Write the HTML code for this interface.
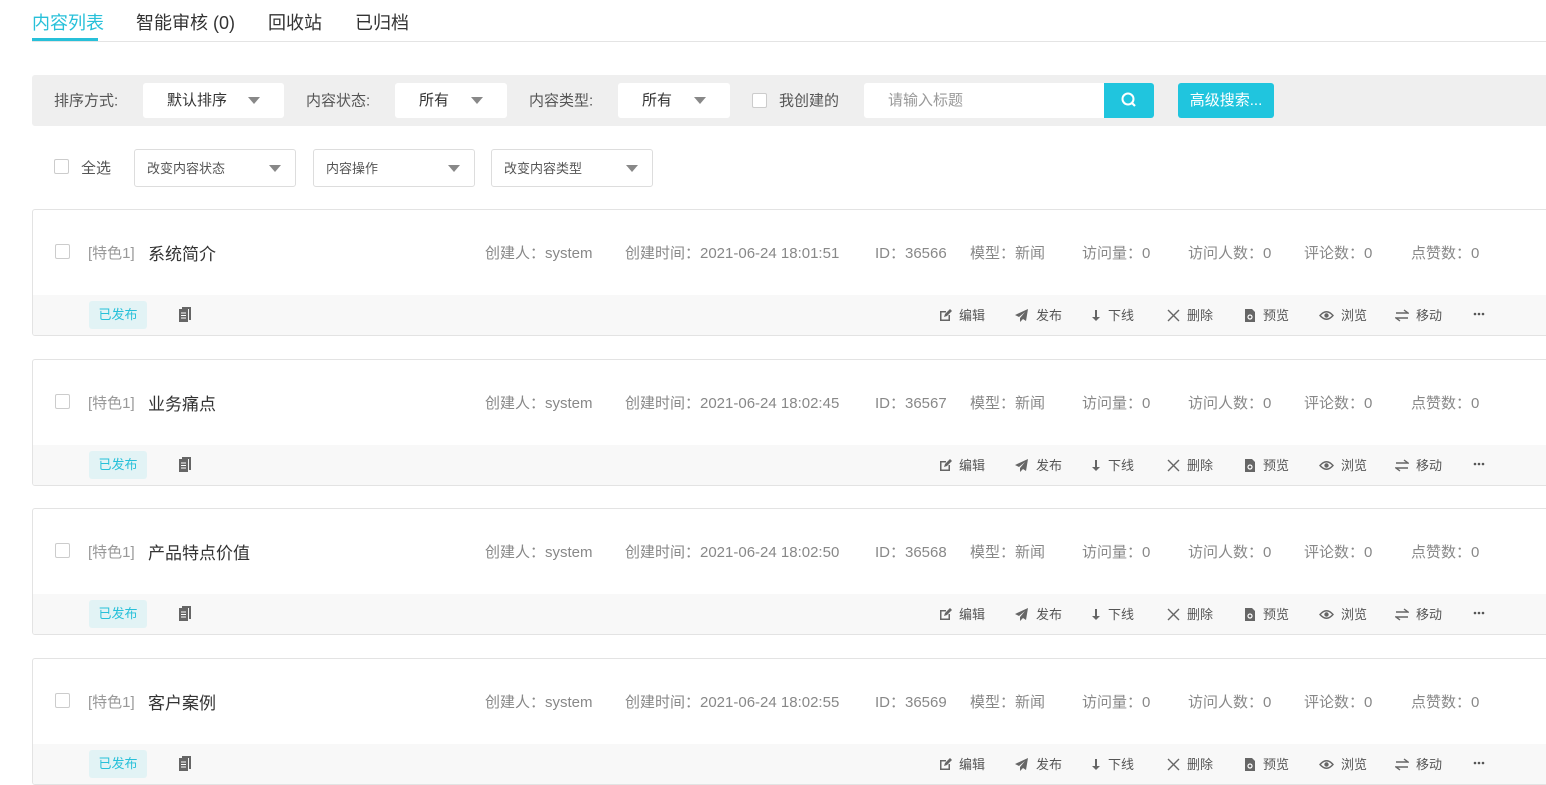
<!DOCTYPE html>
<html><head><meta charset="utf-8"><style>
*{box-sizing:border-box;margin:0;padding:0}
body{width:1546px;height:765px;overflow:hidden;background:#fff;font-family:"Liberation Sans","Noto Sans CJK SC",sans-serif;color:#333;position:relative}
.a{position:absolute;white-space:nowrap}
.tabs{position:absolute;left:32px;top:0;right:0;height:42px;border-bottom:1px solid #e4e4e4}
.tab{position:absolute;top:9px;font-size:18px;color:#333}
.bar{position:absolute;left:32px;top:75px;width:1520px;height:51px;background:#efefef;border-radius:3px}
.sel{position:absolute;background:#fff;border-radius:3px;height:35px;font-size:15px;line-height:35px;color:#333}
.tri{position:absolute;width:0;height:0;border-left:6px solid transparent;border-right:6px solid transparent;border-top:7px solid #888}
.lbl{position:absolute;font-size:15px;color:#555;top:100px;transform:translateY(-50%)}
.cb{position:absolute;width:15px;height:15px;border:1px solid #ccc;border-radius:2px;background:#fff}
.sel2{position:absolute;top:149px;height:38px;border:1px solid #ddd;border-radius:3px;font-size:13px;color:#555;line-height:38px;padding-left:12px}
.card{position:absolute;left:32px;width:1530px;height:127px;border:1px solid #e3e3e3;border-radius:3px;overflow:hidden}
.card .bot{position:absolute;left:0;right:0;top:85px;height:42px;background:#f8f8f8}
.meta{position:absolute;top:32px;font-size:15px;color:#888}
.tag{position:absolute;left:56px;top:6px;width:58px;height:28px;background:#e2f3f5;border-radius:3px;color:#27c0d9;font-size:13px;line-height:28px;text-align:center}
.act{position:absolute;top:10px;font-size:13px;color:#555}
.act svg{vertical-align:-2px;margin-right:7px}
</style></head><body>
<div class="tabs">
<div class="tab" style="left:0;color:#27c0d9">内容列表</div>
<div style="position:absolute;left:0;top:38px;width:66px;height:3px;background:#27c0d9"></div>
<div class="tab" style="left:104px">智能审核 (0)</div>
<div class="tab" style="left:236px">回收站</div>
<div class="tab" style="left:323px">已归档</div>
</div>
<div class="bar"></div>
<div class="lbl" style="left:54px">排序方式:</div>
<div class="sel" style="left:143px;top:83px;width:141px;padding-left:24px">默认排序<div class="tri" style="left:105px;top:14px"></div></div>
<div class="lbl" style="left:306px">内容状态:</div>
<div class="sel" style="left:395px;top:83px;width:112px;padding-left:24px">所有<div class="tri" style="left:76px;top:14px"></div></div>
<div class="lbl" style="left:529px">内容类型:</div>
<div class="sel" style="left:618px;top:83px;width:112px;padding-left:24px">所有<div class="tri" style="left:76px;top:14px"></div></div>
<div class="cb" style="left:752px;top:93px"></div>
<div class="lbl" style="left:779px">我创建的</div>
<div class="sel" style="left:864px;top:83px;width:290px;padding-left:24px;color:#999">请输入标题</div>
<div style="position:absolute;left:1104px;top:83px;width:50px;height:35px;background:#20c5de;border-radius:0 3px 3px 0"><svg width="50" height="35"><circle cx="24" cy="16" r="5.5" fill="none" stroke="#fff" stroke-width="2"/><line x1="28" y1="20" x2="31" y2="23" stroke="#fff" stroke-width="2.2"/></svg></div>
<div style="position:absolute;left:1178px;top:83px;width:96px;height:35px;background:#20c5de;border-radius:3px;color:#fff;font-size:15px;line-height:35px;text-align:center">高级搜索...</div>

<div class="cb" style="left:54px;top:159px"></div>
<div class="a" style="left:81px;top:157px;font-size:15px;color:#555">全选</div>
<div class="sel2" style="left:134px;width:162px">改变内容状态<div class="tri" style="left:134px;top:15px"></div></div>
<div class="sel2" style="left:313px;width:162px">内容操作<div class="tri" style="left:134px;top:15px"></div></div>
<div class="sel2" style="left:491px;width:162px">改变内容类型<div class="tri" style="left:134px;top:15px"></div></div>

<div id="cards"></div>
<script>
var rows=[[209,"系统简介","18:01:51","36566"],[359,"业务痛点","18:02:45","36567"],[508,"产品特点价值","18:02:50","36568"],[658,"客户案例","18:02:55","36569"]];
var ic={
e:'<svg width="13" height="13" viewBox="0 0 13 13"><path d="M1 2h6v1.5H2.5v7h7V6H11v6H1z" fill="#666"/><path d="M5 8l1-3 5-5 2 2-5 5z" fill="#666"/></svg>',
p:'<svg width="14" height="13" viewBox="0 0 14 13"><path d="M13 0L0 6l4 2 6-5-5 6v4l3-3 3 2z" fill="#666"/></svg>',
d:'<svg width="10" height="13" viewBox="0 0 10 13"><path d="M4 1h2v7h3l-4 4-4-4h3z" fill="#666"/></svg>',
x:'<svg width="13" height="13" viewBox="0 0 13 13"><path d="M1 1l11 11M12 1L1 12" stroke="#666" stroke-width="1.4"/></svg>',
v:'<svg width="12" height="13" viewBox="0 0 12 13"><path d="M1 0h7l3 3v10H1z" fill="#666"/><circle cx="6" cy="8" r="2" fill="none" stroke="#fff" stroke-width="1.2"/></svg>',
y:'<svg width="15" height="13" viewBox="0 0 15 13"><path d="M1 6.5Q7.5-1 14 6.5Q7.5 14 1 6.5z" fill="none" stroke="#666" stroke-width="1.4"/><circle cx="7.5" cy="6.5" r="2.2" fill="#666"/></svg>',
m:'<svg width="14" height="13" viewBox="0 0 14 13"><path d="M1 4h12L9 1M13 9H1l4 3" fill="none" stroke="#666" stroke-width="1.4"/></svg>'};
var h="";
rows.forEach(function(r){
h+='<div class="card" style="top:'+r[0]+'px">'+
'<div class="cb" style="left:22px;top:34px"></div>'+
'<div class="meta" style="left:55px;color:#999">[特色1]</div>'+
'<div class="meta" style="left:115px;color:#333;font-size:17px;top:30px">'+r[1]+'</div>'+
'<div class="meta" style="left:452px">创建人：system</div>'+
'<div class="meta" style="left:592px">创建时间：2021-06-24 '+r[2]+'</div>'+
'<div class="meta" style="left:842px">ID：'+r[3]+'</div>'+
'<div class="meta" style="left:937px">模型：新闻</div>'+
'<div class="meta" style="left:1049px">访问量：0</div>'+
'<div class="meta" style="left:1155px">访问人数：0</div>'+
'<div class="meta" style="left:1271px">评论数：0</div>'+
'<div class="meta" style="left:1378px">点赞数：0</div>'+
'<div class="bot"><div class="tag">已发布</div>'+
'<svg style="position:absolute;left:146px;top:12px" width="13" height="16" viewBox="0 0 13 16"><path d="M3 0h9v13H10V2H3z" fill="#666"/><rect x="0" y="2" width="9" height="13" fill="#666"/><path d="M2 6h5M2 8.5h5M2 11h5" stroke="#fff" stroke-width="1"/></svg>'+
'<div class="act" style="left:906px">'+ic.e+'编辑</div>'+
'<div class="act" style="left:982px">'+ic.p+'发布</div>'+
'<div class="act" style="left:1058px">'+ic.d+'下线</div>'+
'<div class="act" style="left:1134px">'+ic.x+'删除</div>'+
'<div class="act" style="left:1211px">'+ic.v+'预览</div>'+
'<div class="act" style="left:1286px">'+ic.y+'浏览</div>'+
'<div class="act" style="left:1362px">'+ic.m+'移动</div>'+
'<svg style="position:absolute;left:1440px;top:17px" width="12" height="4"><circle cx="2" cy="2" r="1.3" fill="#555"/><circle cx="6" cy="2" r="1.3" fill="#555"/><circle cx="10" cy="2" r="1.3" fill="#555"/></svg>'+
'</div></div>';});
document.getElementById("cards").innerHTML=h;
</script>
</body></html>
